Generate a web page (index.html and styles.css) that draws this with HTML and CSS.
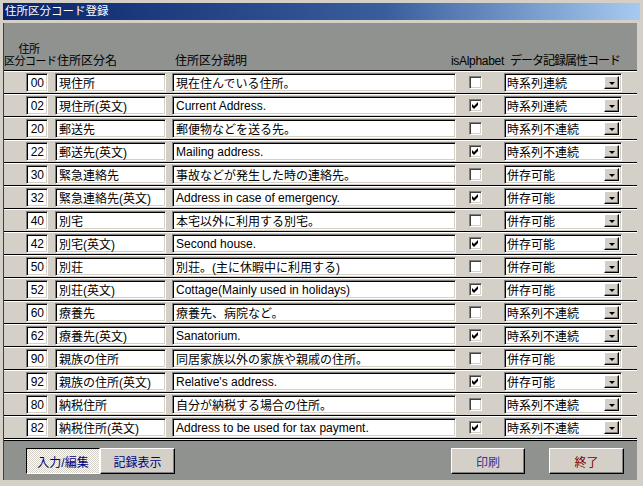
FILE: index.html
```html
<!DOCTYPE html>
<html>
  <head>
    <meta charset="UTF-8" />
    <title>住所区分コード登録</title>
    <link rel="stylesheet" href="styles.css">
  </head>
  <body>
    <div class="window">
      <div class="titlebar">住所区分コード登録</div>

      <div class="form">
        <div class="head">
          <div class="h-code">住所<br />区分コード</div>
          <div class="h-name">住所区分名</div>
          <div class="h-desc">住所区分説明</div>
          <div class="h-alpha">isAlphabet</div>
          <div class="h-attr">データ記録属性コード</div>
        </div>

        <div class="rows">
          <div class="row">
            <span class="fld code">00</span>
            <span class="fld name">現住所</span>
            <span class="fld desc">現在住んでいる住所。</span>
            <span class="chk"></span>
            <span class="fld combo">時系列連続<span class="drop"><i></i></span></span>
          </div>
          <div class="row">
            <span class="fld code">02</span>
            <span class="fld name">現住所(英文)</span>
            <span class="fld desc">Current Address.</span>
            <span class="chk"><svg viewBox="0 0 11 11"><path d="M2 4 L4 6 L8 2 L8 5 L4 9 L2 7 Z" /></svg></span>
            <span class="fld combo">時系列連続<span class="drop"><i></i></span></span>
          </div>
          <div class="row">
            <span class="fld code">20</span>
            <span class="fld name">郵送先</span>
            <span class="fld desc">郵便物などを送る先。</span>
            <span class="chk"></span>
            <span class="fld combo">時系列不連続<span class="drop"><i></i></span></span>
          </div>
          <div class="row">
            <span class="fld code">22</span>
            <span class="fld name">郵送先(英文)</span>
            <span class="fld desc">Mailing address.</span>
            <span class="chk"><svg viewBox="0 0 11 11"><path d="M2 4 L4 6 L8 2 L8 5 L4 9 L2 7 Z" /></svg></span>
            <span class="fld combo">時系列不連続<span class="drop"><i></i></span></span>
          </div>
          <div class="row">
            <span class="fld code">30</span>
            <span class="fld name">緊急連絡先</span>
            <span class="fld desc">事故などが発生した時の連絡先。</span>
            <span class="chk"></span>
            <span class="fld combo">併存可能<span class="drop"><i></i></span></span>
          </div>
          <div class="row">
            <span class="fld code">32</span>
            <span class="fld name">緊急連絡先(英文)</span>
            <span class="fld desc">Address in case of emergency.</span>
            <span class="chk"><svg viewBox="0 0 11 11"><path d="M2 4 L4 6 L8 2 L8 5 L4 9 L2 7 Z" /></svg></span>
            <span class="fld combo">併存可能<span class="drop"><i></i></span></span>
          </div>
          <div class="row">
            <span class="fld code">40</span>
            <span class="fld name">別宅</span>
            <span class="fld desc">本宅以外に利用する別宅。</span>
            <span class="chk"></span>
            <span class="fld combo">併存可能<span class="drop"><i></i></span></span>
          </div>
          <div class="row">
            <span class="fld code">42</span>
            <span class="fld name">別宅(英文)</span>
            <span class="fld desc">Second house.</span>
            <span class="chk"><svg viewBox="0 0 11 11"><path d="M2 4 L4 6 L8 2 L8 5 L4 9 L2 7 Z" /></svg></span>
            <span class="fld combo">併存可能<span class="drop"><i></i></span></span>
          </div>
          <div class="row">
            <span class="fld code">50</span>
            <span class="fld name">別荘</span>
            <span class="fld desc">別荘。(主に休暇中に利用する)</span>
            <span class="chk"></span>
            <span class="fld combo">併存可能<span class="drop"><i></i></span></span>
          </div>
          <div class="row">
            <span class="fld code">52</span>
            <span class="fld name">別荘(英文)</span>
            <span class="fld desc">Cottage(Mainly used in holidays)</span>
            <span class="chk"><svg viewBox="0 0 11 11"><path d="M2 4 L4 6 L8 2 L8 5 L4 9 L2 7 Z" /></svg></span>
            <span class="fld combo">併存可能<span class="drop"><i></i></span></span>
          </div>
          <div class="row">
            <span class="fld code">60</span>
            <span class="fld name">療養先</span>
            <span class="fld desc">療養先、病院など。</span>
            <span class="chk"></span>
            <span class="fld combo">時系列不連続<span class="drop"><i></i></span></span>
          </div>
          <div class="row">
            <span class="fld code">62</span>
            <span class="fld name">療養先(英文)</span>
            <span class="fld desc">Sanatorium.</span>
            <span class="chk"><svg viewBox="0 0 11 11"><path d="M2 4 L4 6 L8 2 L8 5 L4 9 L2 7 Z" /></svg></span>
            <span class="fld combo">時系列不連続<span class="drop"><i></i></span></span>
          </div>
          <div class="row">
            <span class="fld code">90</span>
            <span class="fld name">親族の住所</span>
            <span class="fld desc">同居家族以外の家族や親戚の住所。</span>
            <span class="chk"></span>
            <span class="fld combo">併存可能<span class="drop"><i></i></span></span>
          </div>
          <div class="row">
            <span class="fld code">92</span>
            <span class="fld name">親族の住所(英文)</span>
            <span class="fld desc">Relative's address.</span>
            <span class="chk"><svg viewBox="0 0 11 11"><path d="M2 4 L4 6 L8 2 L8 5 L4 9 L2 7 Z" /></svg></span>
            <span class="fld combo">併存可能<span class="drop"><i></i></span></span>
          </div>
          <div class="row">
            <span class="fld code">80</span>
            <span class="fld name">納税住所</span>
            <span class="fld desc">自分が納税する場合の住所。</span>
            <span class="chk"></span>
            <span class="fld combo">時系列不連続<span class="drop"><i></i></span></span>
          </div>
          <div class="row">
            <span class="fld code">82</span>
            <span class="fld name">納税住所(英文)</span>
            <span class="fld desc">Address to be used for tax payment.</span>
            <span class="chk"><svg viewBox="0 0 11 11"><path d="M2 4 L4 6 L8 2 L8 5 L4 9 L2 7 Z" /></svg></span>
            <span class="fld combo">時系列不連続<span class="drop"><i></i></span></span>
          </div>
        </div>

        <div class="foot">
          <div class="tabs">
            <button class="btn pressed">入力/編集</button>
            <button class="btn">記録表示</button>
          </div>
          <div class="actions">
            <button class="btn print">印刷</button>
            <button class="btn quit">終了</button>
          </div>
        </div>
      </div>
    </div>
  </body>
</html>
```

FILE: styles.css
```css
body {
  margin: 0;
  background: #d4d0c8;
  font-family: "Liberation Sans", "Noto Sans CJK JP", sans-serif;
  font-size: 12px;
  color: #000;
}
.window {
  width: 643px;
  height: 486px;
  overflow: hidden;
  padding-top: 3px;
  box-sizing: border-box;
}
.titlebar {
  height: 17px;
  margin: 0 3px 0 3px;
  padding-left: 2px;
  line-height: 17px;
  font-size: 11.5px;
  color: #fff;
  background: linear-gradient(to right, #0a246a, #3a5e9c 60%, #a6caf0);
}
.form {
  margin: 3px 6px 0 3px;
  border-left: 1px solid #404040;
}

/* header */
.head {
  display: flex;
  align-items: flex-end;
  height: 48px;
  padding-bottom: 3px;
  box-sizing: border-box;
  background: #8f928f;
  border-bottom: 1px solid #000;
  line-height: 12px;
}
.h-code {
  width: 50px;
  text-align: center;
  white-space: nowrap;
  font-size: 11px;
  letter-spacing: -0.5px;
}
.h-name {
  margin-left: 3px;
  width: 118px;
}
.h-desc {
  width: 272px;
}
.h-alpha {
  width: 61px;
  text-align: center;
  letter-spacing: -0.3px;
}
.h-attr {
  margin-left: 2px;
  white-space: nowrap;
  letter-spacing: -1px;
}

/* rows */
.row {
  display: flex;
  align-items: center;
  height: 23px;
  box-sizing: border-box;
  border-top: 1px solid #fff;
  border-bottom: 1px solid #000;
  background: #d4d0c8;
}
.fld {
  display: flex;
  align-items: center;
  height: 19px;
  box-sizing: border-box;
  background: #fff;
  border-top: 1px solid #808080;
  border-left: 1px solid #808080;
  border-right: 1px solid #fff;
  border-bottom: 1px solid #fff;
  box-shadow: inset 1px 1px 0 #000, inset -1px -1px 0 #d4d0c8;
  padding: 0 3px;
  white-space: nowrap;
  overflow: hidden;
}
.code {
  margin-left: 22px;
  width: 22px;
  justify-content: flex-end;
}
.name {
  margin-left: 7px;
  width: 111px;
}
.desc {
  margin-left: 6px;
  width: 284px;
}
.chk {
  margin-left: 13px;
  width: 13px;
  height: 13px;
  box-sizing: border-box;
  background: #fff;
  border-top: 1px solid #808080;
  border-left: 1px solid #808080;
  border-right: 1px solid #fff;
  border-bottom: 1px solid #fff;
  box-shadow: inset 1px 1px 0 #404040, inset -1px -1px 0 #d4d0c8;
}
.chk svg {
  display: block;
  width: 11px;
  height: 11px;
}
.combo {
  margin-left: 22px;
  width: 118px;
  padding: 0 2px 0 2px;
}
.drop {
  margin-left: auto;
  width: 15px;
  height: 13px;
  box-sizing: border-box;
  background: #d4d0c8;
  border-top: 1px solid #fff;
  border-left: 1px solid #fff;
  border-right: 1px solid #000;
  border-bottom: 1px solid #000;
  box-shadow: inset -1px -1px 0 #808080;
  display: flex;
  align-items: center;
  justify-content: center;
}
.drop i {
  width: 0;
  height: 0;
  border-left: 3px solid transparent;
  border-right: 3px solid transparent;
  border-top: 3px solid #000;
  margin-top: 1px;
}

/* footer */
.foot {
  display: flex;
  justify-content: space-between;
  height: 41px;
  box-sizing: border-box;
  padding: 8px 13px 0 22px;
  background: #8f928f;
  border-top: 1px solid #fff;
  box-shadow: inset 0 1px 0 #000;
}
.tabs,
.actions {
  display: flex;
}
.actions {
  gap: 24px;
}
.btn {
  width: 75px;
  height: 26px;
  padding: 0;
  font-family: "Liberation Sans", "Noto Sans CJK JP", sans-serif;
  font-size: 12px;
  color: #000080;
  background: #d4d0c8;
  border-top: 1px solid #fff;
  border-left: 1px solid #fff;
  border-right: 1px solid #000;
  border-bottom: 1px solid #000;
  box-shadow: inset -1px -1px 0 #808080;
}
.btn.pressed {
  width: 74px;
  border-top: 1px solid #000;
  border-left: 1px solid #000;
  border-right: 1px solid #fff;
  border-bottom: 1px solid #fff;
  box-shadow: none;
  background: repeating-conic-gradient(#fff 0 25%, #d4d0c8 0 50%) 0 0 / 2px 2px;
}
.btn.print {
  width: 74px;
  color: #333399;
}
.btn.quit {
  color: #800000;
}
```
